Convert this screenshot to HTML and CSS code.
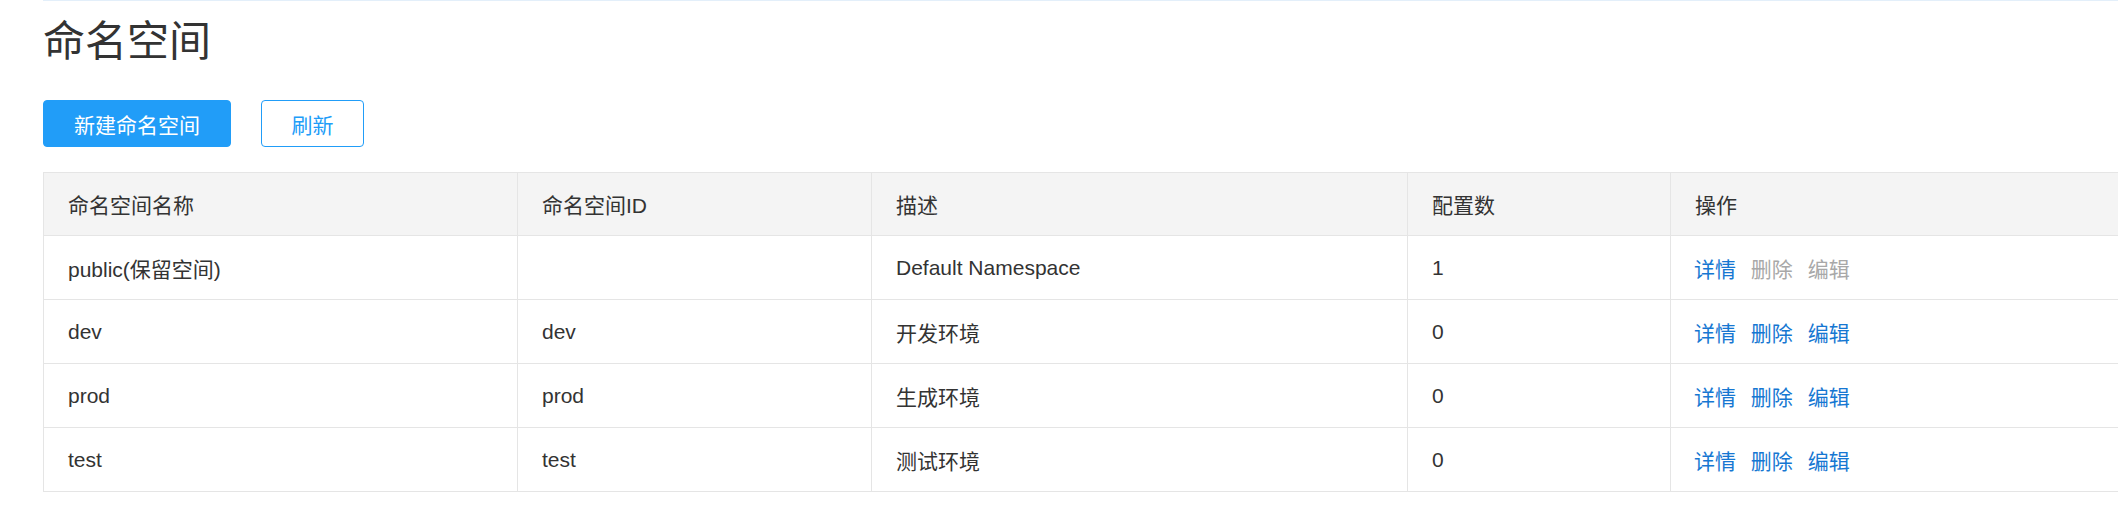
FILE: index.html
```html
<!DOCTYPE html>
<html lang="zh-CN">
<head>
  <meta charset="UTF-8">
  <title>命名空间</title>
  <link rel="stylesheet" href="styles.css">
</head>
<body>
  <div class="page">
    <h1 class="page-title">命名空间</h1>

    <div class="toolbar">
      <button class="btn btn-primary">新建命名空间</button>
      <button class="btn btn-default">刷新</button>
    </div>

    <table class="ns-table">
      <colgroup>
        <col style="width: 474px">
        <col style="width: 354px">
        <col style="width: 536px">
        <col style="width: 263px">
        <col>
      </colgroup>
      <thead>
        <tr>
          <th>命名空间名称</th>
          <th>命名空间ID</th>
          <th>描述</th>
          <th>配置数</th>
          <th>操作</th>
        </tr>
      </thead>
      <tbody>
        <tr>
          <td>public(保留空间)</td>
          <td></td>
          <td>Default Namespace</td>
          <td>1</td>
          <td class="actions">
            <a href="#">详情</a>
            <span class="disabled">删除</span>
            <span class="disabled">编辑</span>
          </td>
        </tr>
        <tr>
          <td>dev</td>
          <td>dev</td>
          <td>开发环境</td>
          <td>0</td>
          <td class="actions">
            <a href="#">详情</a>
            <a href="#">删除</a>
            <a href="#">编辑</a>
          </td>
        </tr>
        <tr>
          <td>prod</td>
          <td>prod</td>
          <td>生成环境</td>
          <td>0</td>
          <td class="actions">
            <a href="#">详情</a>
            <a href="#">删除</a>
            <a href="#">编辑</a>
          </td>
        </tr>
        <tr>
          <td>test</td>
          <td>test</td>
          <td>测试环境</td>
          <td>0</td>
          <td class="actions">
            <a href="#">详情</a>
            <a href="#">删除</a>
            <a href="#">编辑</a>
          </td>
        </tr>
      </tbody>
    </table>
  </div>
</body>
</html>
```

FILE: styles.css
```css
body {
  margin: 0;
  font-family: "Liberation Sans", "Noto Sans CJK SC", sans-serif;
  color: #333;
  background: #fff;
  overflow: hidden;
}

.page {
  margin-left: 43px;
  border-top: 1px solid #e3effa;
  width: 2100px;
}

.page-title {
  margin: 20px 0 0;
  font-size: 42px;
  font-weight: normal;
  line-height: 42px;
  color: #333;
}

.toolbar {
  display: flex;
  gap: 30px;
  margin-top: 37px;
}

.btn {
  height: 47px;
  font-family: inherit;
  font-size: 21px;
  border-radius: 4px;
  cursor: pointer;
}

.btn-primary {
  width: 188px;
  background: #219df8;
  border: 1px solid #219df8;
  color: #fff;
}

.btn-default {
  width: 103px;
  background: #fff;
  border: 1px solid #219df8;
  color: #219df8;
}

.ns-table {
  margin-top: 25px;
  width: 100%;
  table-layout: fixed;
  border-collapse: collapse;
  font-size: 21px;
}

.ns-table th,
.ns-table td {
  border: 1px solid #e5e5e5;
  padding: 0 24px;
  text-align: left;
  vertical-align: middle;
}

.ns-table th {
  height: 62px;
  background: #f4f4f4;
  font-weight: normal;
}

.ns-table td {
  height: 63px;
}

.ns-table .actions {
  padding-left: 23px;
}

.actions a,
.actions span {
  margin-right: 9px;
}

.actions a {
  color: #1677d2;
  text-decoration: none;
}

.actions .disabled {
  color: #a8a8a8;
}
```
